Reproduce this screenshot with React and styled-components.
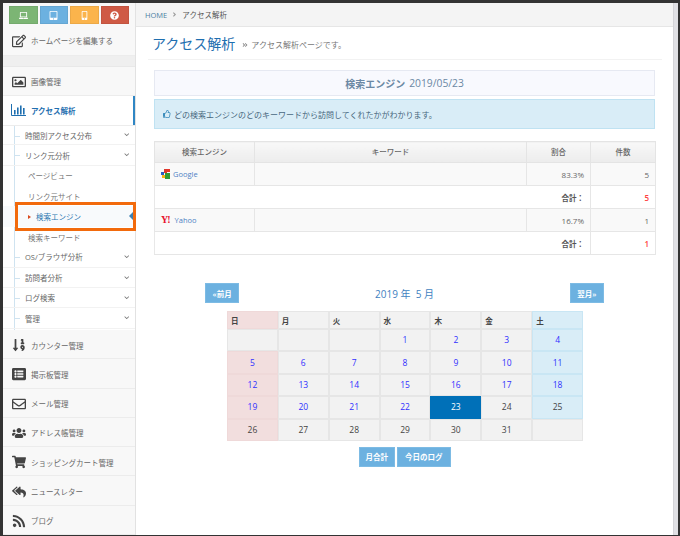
import React from 'react';
import styled, { createGlobalStyle } from 'styled-components';
import { FaRegEdit, FaRegImage, FaSortNumericDown, FaRegEnvelope, FaUsers, FaShoppingCart, FaReplyAll, FaRss, FaLaptop, FaTabletAlt, FaMobileAlt, FaQuestionCircle, FaRegThumbsUp, FaListAlt, FaChevronDown, FaAngleRight, FaAngleDoubleRight } from 'react-icons/fa';

const Global = createGlobalStyle`
  html, body { margin: 0; padding: 0; }
  * { box-sizing: border-box; }
  body { font-family: "Open Sans", "Noto Sans CJK JP", sans-serif; color: #555; }
`;

const Frame = styled.div`
  width: 680px; height: 536px; overflow: hidden; background: #333;
  padding: 3px 2px 1px 3px; display: flex;
`;
const Sidebar = styled.aside`
  width: 133px; background: #f8f8f8; display: flex; flex-direction: column; flex: none;
  border-right: 1px solid #e2e2e2;
`;
const QuickBar = styled.div`
  height: 22px; padding: 3px 6px 0; display: flex; gap: 2px; background: #f8f8f8;
`;
const Quick = styled.div`
  flex: 1; height: 18px; background: ${p => p.$c}; color: #fff; font-size: 9px;
  display: flex; align-items: center; justify-content: center; border: 1px solid rgba(0,0,0,.06);
`;
const NavRow = styled.div`
  height: ${p => p.$h || 29.3}px; display: flex; align-items: center; padding: ${p => p.$active ? 0 : 2}px 0 0 8px; gap: 5px;
  border-bottom: 1px solid #ececec; font-size: 7.5px; color: ${p => p.$active ? '#1f6fb0' : '#666'};
  font-weight: ${p => p.$active ? 700 : 400}; background: ${p => p.$active ? '#fff' : 'transparent'};
  flex: none; position: relative;
  ${p => p.$active && 'box-shadow: inset -2px 0 0 #2f86c4;'}
`;
const NavIcon = styled.span`
  width: 15px; display: flex; justify-content: center; color: ${p => p.$active ? '#1f6fb0' : '#444'}; font-size: 14px; flex: none;
`;
const Spacer = styled.div`
  height: 11px; background: #efefef; border-bottom: 1px solid #e8e8e8; flex: none;
`;
const Tree = styled.div`
  background: #fff; position: relative; flex: none; height: 204px;
  &::before { content: ''; position: absolute; left: 11px; top: 0; bottom: 0; width: 1px; background: #cfe3f0; }
`;
const TreeRow = styled.div`
  height: 20.4px; display: flex; align-items: center; justify-content: space-between;
  padding: 0 6px 0 22px; font-size: 7.5px; color: #666; border-bottom: 1px solid #f2f2f2; position: relative;
  &:first-child { height: 19.4px; }
  &::before { content: ''; position: absolute; left: 12px; top: 10px; width: 5px; height: 1px; background: #cfe3f0; }
  svg { font-size: 5.5px; color: #777; }
`;
const LeafRow = styled.div`
  height: 20.4px; display: flex; align-items: center; padding-left: 25px; font-size: 7.5px; color: #777;
`;
const ActiveLeaf = styled.div`
  height: 20.4px; display: flex; align-items: center; padding-left: 25px; font-size: 7.5px; color: #2b76b0;
  background: #f8fafc; position: relative;
  &::before { content: ''; border-left: 3px solid #d9481c; border-top: 2px solid transparent; border-bottom: 2px solid transparent; margin-right: 5px; }
`;
const Caret = styled.span`
  position: absolute; right: 0; top: 4px; width: 0; height: 0;
  border-right: 6px solid #3d7fb0; border-top: 6px solid transparent; border-bottom: 6px solid transparent;
`;
const Highlight = styled.span`
  position: absolute; left: 12px; right: -1px; top: -4px; bottom: -4px; border: 3px solid #f26a0c; pointer-events: none; z-index: 2;
`;
const Main = styled.main`
  flex: 1; background: #fff; display: flex; flex-direction: column; min-width: 0;
`;
const Crumb = styled.div`
  height: 24px; background: #f4f4f4; border-bottom: 1px solid #e6e6e6; display: flex; align-items: center;
  padding-left: 9px; gap: 4px; font-size: 7.5px; color: #555; flex: none;
  a { color: #4d7fa3; }
  svg { color: #999; font-size: 7px; }
`;
const PageHead = styled.div`
  height: 33px; margin: 0 11px 0 12px; padding-left: 4px; border-bottom: 1px solid #f2f2f2; display: flex; align-items: center; gap: 7px; flex: none;
`;
const Title = styled.h1`
  margin: 0; font-size: 14px; font-weight: 400; color: #1f6fb0;
`;
const Sub = styled.span`
  font-size: 8px; color: #777; display: flex; align-items: center; gap: 3px; padding-top: 3px;
  svg { font-size: 6px; color: #888; }
`;
const Content = styled.div`
  margin: 10px 18px 0 18px; display: flex; flex-direction: column; flex: none;
`;
const DatePanel = styled.div`
  height: 26px; background: #f8f9fe; border: 1px solid #e6e9f2; display: flex; align-items: center; justify-content: center;
  font-size: 10px; font-weight: 600; color: #6b88a4;
  span { font-weight: 400; margin-left: 4px; font-size: 10.3px; }
`;
const Alert = styled.div`
  height: 30px; margin-top: 3px; background: #d9edf7; border: 1px solid #bfe2f2; display: flex; align-items: center; padding-left: 8px; gap: 3px;
  font-size: 8px; color: #48687e;
  svg { color: #3c8dbc; font-size: 8px; }
`;
const StatTable = styled.table`
  margin-top: 12px; width: 501px; border-collapse: collapse; table-layout: fixed; border: 1px solid #e8e8e8;
  font-size: 7.5px;
  th { height: 21px; background: linear-gradient(#f8f8f8, #ececec); border: 1px solid #e4e4e4; font-weight: 500; color: #666; padding: 0 0 2px; }
  td { height: 23px; border: 1px solid #e6e6e6; padding: 0 6px; color: #666; }
  td.num { text-align: right; font-size: 8px; }
`;
const DataRow = styled.tr`
  td { background: #f9f9f9; }
`;
const TotalRow = styled.tr`
  td { background: #fff; border-left: 0; font-weight: 700; color: #555; }
  td.num { font-size: 7.5px; }
  td + td, td.num + td.num { border-left: 1px solid #e6e6e6; color: #ff4040; font-weight: 600; font-size: 8px; }
`;
const Engine = styled.a`
  display: flex; align-items: center; gap: 2px; color: #4f82c4; font-size: 7.5px;
`;
const YMark = styled.span`
  font-family: "Liberation Serif", serif; font-weight: 700; color: #e8112d; font-size: 10px; line-height: 1; letter-spacing: -1px; margin-right: 3px;
`;
const CalNav = styled.div`
  margin: 28px 51px 0; height: 20px; display: flex; align-items: center; justify-content: space-between; color: #3f7fbf; font-size: 10px;
`;
const Btn = styled.div`
  height: 20px; padding: 0 ${p => p.$px || 6.5}px; background: #6cb1e0; border: 1px solid #7dbbe4; color: #fff; font-size: 7.5px; font-weight: 600;
  display: flex; align-items: center; justify-content: center;
`;
const CalGrid = styled.div`
  margin: 8px 0 0 73px; width: 356px; display: grid; grid-template-columns: repeat(7, 1fr);
  grid-template-rows: 18px repeat(5, 22.4px);
`;
const HeadCell = styled.div`
  background: ${p => p.$k === 'sun' ? '#f2dede' : p.$k === 'sat' ? '#d9edf7' : '#f2f2f2'};
  border: 1px solid ${p => p.$k === 'sun' ? '#efd9d9' : p.$k === 'sat' ? '#c9e6f4' : '#e6e6e6'};
  font-size: 7.5px; font-weight: 700; color: #444; display: flex; align-items: center; padding-left: 3px;
`;
const DayCell = styled.div`
  background: ${p => p.$today ? '#0070b8' : p.$k === 'sun' ? '#f2dede' : p.$k === 'sat' ? '#d9edf7' : '#f2f2f2'};
  border: 1px solid ${p => p.$today ? '#0070b8' : p.$k === 'sun' ? '#efd9d9' : p.$k === 'sat' ? '#c9e6f4' : '#e6e6e6'};
  color: ${p => p.$today ? '#fff' : p.$link ? '#3030ff' : '#444'};
  font-size: 8.5px; font-weight: ${p => p.$link || p.$today ? 500 : 400};
  display: flex; align-items: center; justify-content: center; padding-bottom: 1px;
`;
const CalActions = styled.div`
  margin-top: 6px; display: flex; justify-content: center; gap: 2px;
`;
const ScrollTrack = styled.div`
  width: 5px; background: #e0e0e4; flex: none; border-left: 1px solid #d4d4d8;
`;

const GoogleIcon = () => (
  <svg width="10" height="10" viewBox="0 0 10 10">
    <rect x="0" y="3" width="3" height="3" fill="#2a5fc4" />
    <rect x="3" y="0" width="3" height="4" fill="#d93a2e" />
    <rect x="6" y="0" width="3" height="3" fill="#e8352a" />
    <rect x="4" y="4" width="5" height="6" fill="#2f9a35" />
    <rect x="1" y="6" width="3" height="3" fill="#f2b418" />
  </svg>
);
const ChartIcon = () => (
  <svg width="15" height="12" viewBox="0 0 15 12" fill="#1f6fb0">
    <path d="M0.5 0v11.5H15" fill="none" stroke="#1f6fb0" strokeWidth="1" />
    <rect x="3" y="6" width="1.6" height="4.5" />
    <rect x="6" y="3.5" width="1.6" height="7" />
    <rect x="9" y="1.5" width="1.6" height="9" />
    <rect x="12" y="4" width="1.6" height="6.5" />
  </svg>
);

const weeks = [
  [null, null, null, 1, 2, 3, 4],
  [5, 6, 7, 8, 9, 10, 11],
  [12, 13, 14, 15, 16, 17, 18],
  [19, 20, 21, 22, 23, 24, 25],
  [26, 27, 28, 29, 30, 31, null],
];
const dows = ['日', '月', '火', '水', '木', '金', '土'];
const kind = i => (i === 0 ? 'sun' : i === 6 ? 'sat' : 'day');

const lower = [
  ['掲示板管理', <FaListAlt />],
  ['メール管理', <FaRegEnvelope />],
  ['アドレス帳管理', <FaUsers />],
  ['ショッピングカート管理', <FaShoppingCart />],
  ['ニュースレター', <FaReplyAll />],
  ['ブログ', <FaRss />],
];

export default function App() {
  return (
    <Frame>
      <Global />
      <Sidebar>
        <QuickBar>
          <Quick $c="#7cb574"><FaLaptop /></Quick>
          <Quick $c="#6cb1e0"><FaTabletAlt /></Quick>
          <Quick $c="#fbb44c"><FaMobileAlt /></Quick>
          <Quick $c="#cf5a45"><FaQuestionCircle /></Quick>
        </QuickBar>
        <NavRow $h={31}><NavIcon><FaRegEdit /></NavIcon>ホームページを編集する</NavRow>
        <Spacer />
        <NavRow><NavIcon><FaRegImage /></NavIcon>画像管理</NavRow>
        <NavRow $active $h={30}><NavIcon $active><ChartIcon /></NavIcon>アクセス解析</NavRow>
        <Tree>
          <TreeRow>時間別アクセス分布<FaChevronDown /></TreeRow>
          <TreeRow>リンク元分析<FaChevronDown /></TreeRow>
          <LeafRow>ページビュー</LeafRow>
          <LeafRow>リンク元サイト</LeafRow>
          <ActiveLeaf>検索エンジン<Caret /><Highlight /></ActiveLeaf>
          <LeafRow>検索キーワード</LeafRow>
          <TreeRow>OS/ブラウザ分析<FaChevronDown /></TreeRow>
          <TreeRow>訪問者分析<FaChevronDown /></TreeRow>
          <TreeRow>ログ検索<FaChevronDown /></TreeRow>
          <TreeRow>管理<FaChevronDown /></TreeRow>
        </Tree>
        <NavRow><NavIcon><FaSortNumericDown /></NavIcon>カウンター管理</NavRow>
        {lower.map(([label, icon]) => (
          <NavRow key={label}><NavIcon>{icon}</NavIcon>{label}</NavRow>
        ))}
      </Sidebar>
      <Main>
        <Crumb><a>HOME</a><FaAngleRight />アクセス解析</Crumb>
        <PageHead>
          <Title>アクセス解析</Title>
          <Sub><FaAngleDoubleRight />アクセス解析ページです。</Sub>
        </PageHead>
        <Content>
          <DatePanel>検索エンジン<span>2019/05/23</span></DatePanel>
          <Alert><FaRegThumbsUp />どの検索エンジンのどのキーワードから訪問してくれたかがわかります。</Alert>
          <StatTable>
            <colgroup><col width="100" /><col width="272" /><col width="64" /><col width="65" /></colgroup>
            <thead><tr><th>検索エンジン</th><th>キーワード</th><th>割合</th><th>件数</th></tr></thead>
            <tbody>
              <DataRow><td><Engine><GoogleIcon />Google</Engine></td><td /><td className="num">83.3%</td><td className="num">5</td></DataRow>
              <TotalRow><td className="num" colSpan={3}>合計：</td><td className="num">5</td></TotalRow>
              <DataRow><td><Engine><YMark>Y!</YMark>Yahoo</Engine></td><td /><td className="num">16.7%</td><td className="num">1</td></DataRow>
              <TotalRow><td className="num" colSpan={3}>合計：</td><td className="num">1</td></TotalRow>
            </tbody>
          </StatTable>
          <CalNav>
            <Btn>«前月</Btn>
            <span>2019 年 &nbsp;5 月</span>
            <Btn>翌月»</Btn>
          </CalNav>
          <CalGrid>
            {dows.map((d, i) => <HeadCell key={d} $k={kind(i)}>{d}</HeadCell>)}
            {weeks.flatMap((w, r) => w.map((d, i) => (
              <DayCell key={`${r}-${i}`} $k={d === null ? 'day' : kind(i)} $today={d === 23} $link={d !== null && d < 23}>{d}</DayCell>
            )))}
          </CalGrid>
          <CalActions>
            <Btn $px={6}>月合計</Btn>
            <Btn $px={7}>今日のログ</Btn>
          </CalActions>
        </Content>
      </Main>
      <ScrollTrack />
    </Frame>
  );
}
